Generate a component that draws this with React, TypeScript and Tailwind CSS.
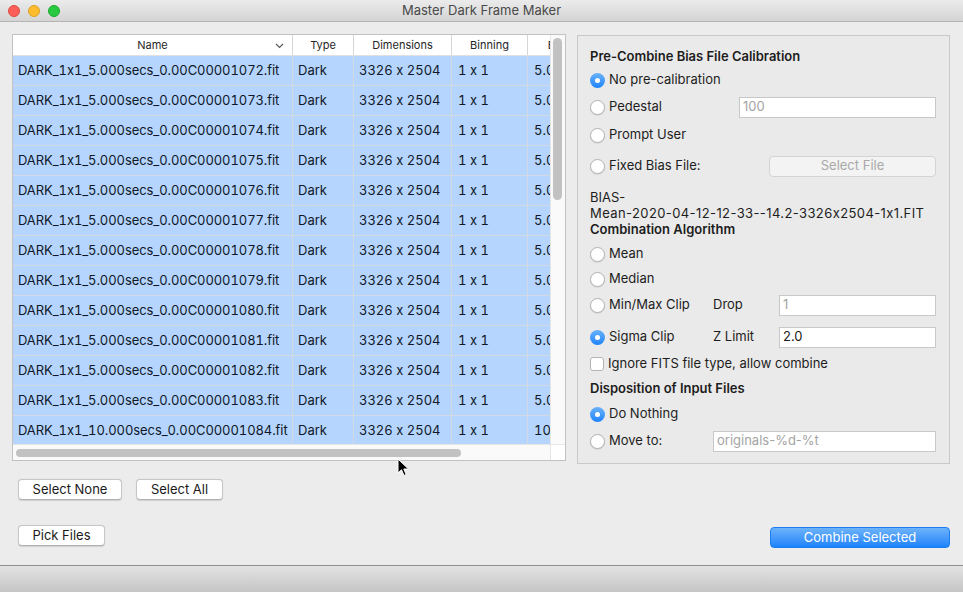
import React from "react";

const files = [
	["DARK_1x1_5.000secs_0.00C00001072.fit", "5.000"],
	["DARK_1x1_5.000secs_0.00C00001073.fit", "5.000"],
	["DARK_1x1_5.000secs_0.00C00001074.fit", "5.000"],
	["DARK_1x1_5.000secs_0.00C00001075.fit", "5.000"],
	["DARK_1x1_5.000secs_0.00C00001076.fit", "5.000"],
	["DARK_1x1_5.000secs_0.00C00001077.fit", "5.000"],
	["DARK_1x1_5.000secs_0.00C00001078.fit", "5.000"],
	["DARK_1x1_5.000secs_0.00C00001079.fit", "5.000"],
	["DARK_1x1_5.000secs_0.00C00001080.fit", "5.000"],
	["DARK_1x1_5.000secs_0.00C00001081.fit", "5.000"],
	["DARK_1x1_5.000secs_0.00C00001082.fit", "5.000"],
	["DARK_1x1_5.000secs_0.00C00001083.fit", "5.000"],
	["DARK_1x1_10.000secs_0.00C00001084.fit", "10.000"],
];

function Radio({ on }: { on?: boolean }) {
	if (on) {
		return (
			<span className="w-[15px] h-[15px] rounded-full bg-gradient-to-b from-[#69b1fa] to-[#1b83fb] flex items-center justify-center shrink-0">
				<span className="w-[5px] h-[5px] rounded-full bg-white" />
			</span>
		);
	}
	return <span className="w-[15px] h-[15px] rounded-full bg-white border border-[#b4b4b4] shadow-[0_0.5px_1px_rgba(0,0,0,0.15)] shrink-0" />;
}

function RadioRow({ on, label, mt, lw, children }: { on?: boolean; label: string; mt: string; lw?: string; children?: React.ReactNode }) {
	return (
		<div className={`flex items-center h-6 ${mt}`}>
			<Radio on={on} />
			<span className={`ml-[4px] text-[13px] text-[#1d1d1d] whitespace-nowrap shrink-0 ${lw ?? ""}`}>{label}</span>
			{children}
		</div>
	);
}

function Field({ value, dim, cls }: { value: string; dim?: boolean; cls: string }) {
	return (
		<div className={`h-[21px] bg-white border border-[#c8c8c8] flex items-center pl-[3px] text-[13px] ${dim ? "text-[#a4a4a4]" : "text-[#1a1a1a]"} ${cls}`}>
			{value}
		</div>
	);
}

function MacButton({ label, cls }: { label: string; cls: string }) {
	return (
		<div className={`h-[21px] bg-white border border-[#c6c6c6] border-b-[#b0b0b0] rounded-[4px] shadow-[0_0.5px_1px_rgba(0,0,0,0.12)] flex items-center justify-center text-[13px] text-[#1a1a1a] ${cls}`}>
			{label}
		</div>
	);
}

export default function App() {
	return (
		<div
			className="w-[963px] h-[592px] flex flex-col bg-[#ececec] overflow-hidden relative"
			style={{ fontFamily: "Inter, 'Liberation Sans', sans-serif", fontFeatureSettings: "'calt' 0" }}
		>

			{/* Title bar */}
			<div className="h-[22px] shrink-0 bg-gradient-to-b from-[#ebebeb] to-[#d4d4d4] border-b border-[#b5b5b5] flex items-center relative">
				<div className="flex gap-[8px] pl-[8px]">
					<span className="w-[12px] h-[12px] rounded-full bg-[#fc5f57] border border-[#de4a41]" />
					<span className="w-[12px] h-[12px] rounded-full bg-[#fdbc2e] border border-[#dea123]" />
					<span className="w-[12px] h-[12px] rounded-full bg-[#28c840] border border-[#1daa2c]" />
				</div>
				<div className="flex-1 text-center text-[13px] text-[#4a4a4a] pr-[60px]">Master Dark Frame Maker</div>
			</div>

			{/* Main */}
			<div className="flex-1 flex">
				{/* Left column */}
				<div className="w-[577px] shrink-0 pl-[12px] pt-[12px]">
					<div className="w-[554px] h-[427px] border border-[#c2c2c2] bg-white flex flex-col">
						<div className="flex h-[409px]">
							<div className="w-[537px] overflow-hidden">
								{/* Header */}
								<div className="flex h-[21px] bg-white text-[11px] text-[#262626] border-b border-[#e0e0e0] w-[620px]">
									<div className="w-[280px] flex items-center justify-center relative border-r border-[#d6d6d6]">
										Name
										<svg className="absolute right-[8px] top-[8px]" width="9" height="6" viewBox="0 0 9 6">
											<path d="M1 1 L4.5 4.5 L8 1" fill="none" stroke="#5a5a5a" strokeWidth="1.2" />
										</svg>
									</div>
									<div className="w-[61px] flex items-center justify-center border-r border-[#d6d6d6]">Type</div>
									<div className="w-[98px] flex items-center justify-center border-r border-[#d6d6d6]">Dimensions</div>
									<div className="w-[76px] flex items-center justify-center border-r border-[#d6d6d6]">Binning</div>
									<div className="w-[88px] flex items-center justify-center">Exposure</div>
								</div>
								{/* Rows */}
								{files.map(([name, exp]) => (
									<div key={name} className="flex h-[30px] bg-[#b5d5fe] border-b border-[#d2d9e2] text-[13px] text-[#101828] w-[620px] tabular-nums">
										<div className="w-[280px] pl-[5px] flex items-center border-r border-[#d2d9e2] whitespace-nowrap tracking-[-0.08px]">{name}</div>
										<div className="w-[61px] pl-[5px] flex items-center border-r border-[#d2d9e2]">Dark</div>
										<div className="w-[98px] pl-[5px] flex items-center border-r border-[#d2d9e2]">3326 x 2504</div>
										<div className="w-[76px] pl-[6px] flex items-center border-r border-[#d2d9e2]">1 x 1</div>
										<div className="w-[88px] pl-[6px] flex items-center">{exp}</div>
									</div>
								))}
							</div>
							{/* vertical scroller */}
							<div className="w-[15px] bg-[#fafafa] border-l border-[#e6e6e6] pt-[3px] pl-[2px]">
								<div className="w-[9px] h-[162px] rounded-full bg-[#c2c2c2]" />
							</div>
						</div>
						{/* horizontal scroller */}
						<div className="flex h-[16px] border-t border-[#e6e6e6]">
							<div className="w-[537px] bg-[#fafafa] pl-[3px] pt-[4px]">
								<div className="w-[445px] h-[8px] rounded-full bg-[#c2c2c2]" />
							</div>
							<div className="flex-1 bg-white border-l border-[#e6e6e6]" />
						</div>
					</div>

					<div className="flex gap-[14px] mt-[18px] pl-[6px]">
						<MacButton label="Select None" cls="w-[104px]" />
						<MacButton label="Select All" cls="w-[87px]" />
					</div>
					<div className="mt-[25px] pl-[6px]">
						<MacButton label="Pick Files" cls="w-[87px]" />
					</div>
				</div>

				{/* Right column */}
				<div className="w-[373px] shrink-0 pt-[13px] flex flex-col">
					<div className="w-[373px] h-[429px] border border-[#c9c9c9] bg-[#eaeaea] pl-[12px] pr-[13px] pt-[12px] text-[13px] text-[#1d1d1d]">
						<div className="h-4 leading-4 font-semibold">Pre-Combine Bias File Calibration</div>
						<RadioRow on label="No pre-calibration" mt="mt-[4px]" />
						<RadioRow label="Pedestal" mt="mt-[3px]" lw="w-[130px]">
							<Field value="100" dim cls="flex-1" />
						</RadioRow>
						<RadioRow label="Prompt User" mt="mt-[4px]" />
						<RadioRow label="Fixed Bias File:" mt="mt-[7px]" lw="w-[160px]">
							<div className="flex-1 h-[21px] rounded-[4px] bg-[#f3f3f3] border border-[#d4d4d4] flex items-center justify-center text-[#a9a9a9]">Select File</div>
						</RadioRow>
						<div className="mt-[11px] leading-4">
							<div>BIAS-</div>
							<div className="whitespace-nowrap tracking-[0.4px]">Mean-2020-04-12-12-33--14.2-3326x2504-1x1.FIT</div>
							<div className="font-semibold">Combination Algorithm</div>
						</div>
						<RadioRow label="Mean" mt="mt-[5px]" />
						<RadioRow label="Median" mt="mt-[1px]" />
						<RadioRow label="Min/Max Clip" mt="mt-[2px]" lw="w-[104px]">
							<span className="w-[66px] shrink-0">Drop</span>
							<Field value="1" dim cls="flex-1" />
						</RadioRow>
						<RadioRow on label="Sigma Clip" mt="mt-[8px]" lw="w-[104px]">
							<span className="w-[66px] shrink-0">Z Limit</span>
							<Field value="2.0" cls="flex-1" />
						</RadioRow>
						<div className="flex items-center h-6 mt-[3px]">
							<span className="w-[14px] h-[14px] rounded-[3px] bg-white border border-[#b4b4b4] shrink-0" />
							<span className="ml-[4px]">Ignore FITS file type, allow combine</span>
						</div>
						<div className="h-4 leading-4 mt-[4px] font-semibold">Disposition of Input Files</div>
						<RadioRow on label="Do Nothing" mt="mt-[6px]" />
						<RadioRow label="Move to:" mt="mt-[3px]" lw="w-[104px]">
							<Field value="originals-%d-%t" dim cls="flex-1" />
						</RadioRow>
					</div>
					<div className="flex justify-end mt-[63px]">
						<div className="w-[180px] h-[21px] rounded-[4px] bg-gradient-to-b from-[#6cb3fa] to-[#1b82fb] border border-[#1a7ef0] flex items-center justify-center text-[13px] text-white">
							Combine Selected
						</div>
					</div>
				</div>
			</div>

			{/* Bottom bar */}
			<div className="h-[27px] shrink-0 border-t border-[#8f8f8f] bg-gradient-to-b from-[#e3e3e3] to-[#c5c5c5]" />

			{/* Mouse pointer */}
			<svg className="absolute left-[397px] top-[458px]" width="13" height="20" viewBox="0 0 13 20">
				<path d="M1 1 L1 15 L4.5 11.8 L7 17.5 L9.2 16.6 L6.8 11 L11.5 11 Z" fill="#000" stroke="#fff" strokeWidth="1" strokeLinejoin="round" />
			</svg>
		</div>
	);
}
